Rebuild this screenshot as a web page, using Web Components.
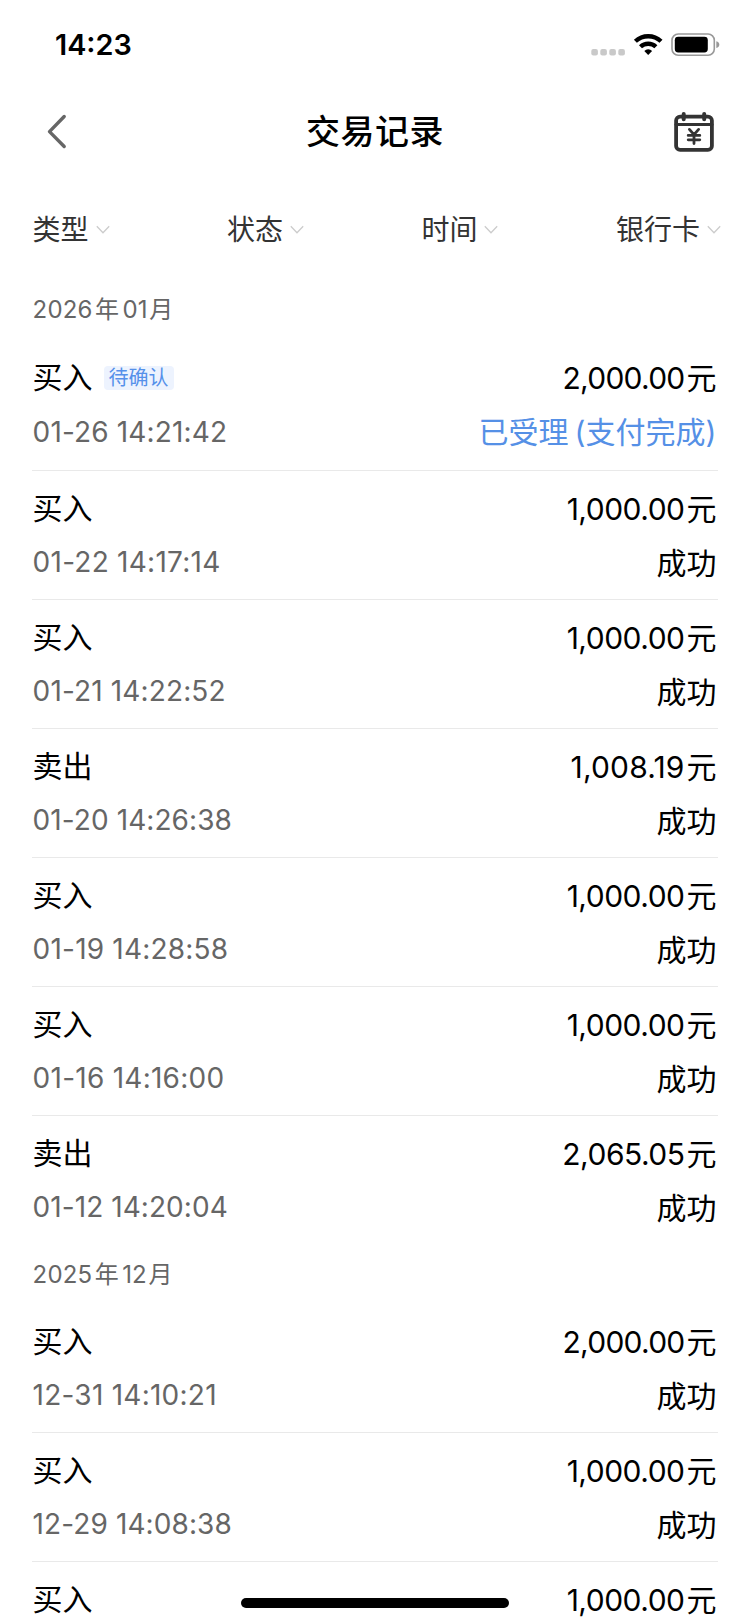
<!DOCTYPE html>
<html lang="zh-CN">
<head>
<meta charset="utf-8">
<title>交易记录</title>
<style>
html,body{margin:0;padding:0;height:1624px;overflow:hidden;background:#fff}
body{font-family:Inter,"Noto Sans CJK SC",sans-serif;color:#000}
</style>
</head>
<body>
<app-screen>
  <status-bar slot="top">14:23</status-bar>
  <nav-bar slot="top">交易记录</nav-bar>
  <filter-bar slot="top">
    <filter-item>类型</filter-item><filter-item>状态</filter-item><filter-item>时间</filter-item><filter-item>银行卡</filter-item>
  </filter-bar>
  <month-group year="2026" month="01" class="first">
    <trade-row kind="买入" tag="待确认" amount="2,000.00" time="01-26 14:21:42" style="--a:-.75px;--t:.15px" pending>已受理<i></i>(支付完成)</trade-row>
    <trade-row kind="买入" amount="1,000.00" time="01-22 14:17:14" style="--t:.25px">成功</trade-row>
    <trade-row kind="买入" amount="1,000.00" time="01-21 14:22:52" style="--t:.14px">成功</trade-row>
    <trade-row kind="卖出" amount="1,008.19" time="01-20 14:26:38" style="--a:.15px;--t:.08px">成功</trade-row>
    <trade-row kind="买入" amount="1,000.00" time="01-19 14:28:58" style="--t:.2px">成功</trade-row>
    <trade-row kind="买入" amount="1,000.00" time="01-16 14:16:00" style="--t:.25px">成功</trade-row>
    <trade-row kind="卖出" amount="2,065.05" time="01-12 14:20:04" style="--t:.06px" last>成功</trade-row>
  </month-group>
  <month-group year="2025" month="12">
    <trade-row kind="买入" amount="2,000.00" time="12-31 14:10:21" style="--a:-.75px;--t:.25px">成功</trade-row>
    <trade-row kind="买入" amount="1,000.00" time="12-29 14:08:38" style="--t:.1px">成功</trade-row>
    <trade-row kind="买入" amount="1,000.00" time="" last></trade-row>
  </month-group>
</app-screen>
<script>
const define = (name, render) => customElements.define(name, class extends HTMLElement {
  connectedCallback() {
    if (this.shadowRoot) return;
    this.attachShadow({mode: 'open'}).innerHTML = render(this);
  }
});

define('app-screen', () => `
<style>
:host{display:block;position:relative;width:750px;height:1624px;overflow:hidden;background:#fff}
.home{position:absolute;left:241px;top:1598px;width:268px;height:10px;border-radius:5px;background:#000}
</style>
<slot name="top"></slot><slot></slot><div class="home"></div>`);

define('status-bar', () => `
<style>
:host{display:flex;justify-content:space-between;align-items:center;height:90px;padding:0 30px 0 55px;box-sizing:border-box;font-size:28.8px;font-weight:600}
svg{display:block}
span{padding-bottom:2px}
</style>
<span><slot></slot></span>
<svg width="130" height="30" viewBox="590 30 130 30">
  <g fill="#c9c9c9"><rect x="591.3" y="49" width="6.6" height="6.4" rx="2"/><rect x="600.3" y="49" width="6.6" height="6.4" rx="2"/><rect x="609.3" y="49" width="6.6" height="6.4" rx="2"/><rect x="618.3" y="49" width="6.6" height="6.4" rx="2"/></g>
  <g fill="none" stroke="#000" stroke-width="4.4"><path d="M635.4 41.25a18.8 18.8 0 0 1 25.6 0"/><path d="M640.5 46.75a11.3 11.3 0 0 1 15.4 0"/></g>
  <path d="M644.3 50.9a5.6 5.6 0 0 1 7.8 0l-3.9 4.1z"/>
  <rect x="672" y="34" width="42.3" height="21.2" rx="6.2" fill="none" stroke="#999" stroke-width="1.6"/>
  <rect x="674.8" y="36.8" width="33" height="15.6" rx="3.4"/>
  <path d="M716.3 41.2q3 .8 3 3.4t-3 3.4z" fill="#999"/>
</svg>`);

define('nav-bar', () => `
<style>
:host{display:grid;grid-template-columns:60px 1fr 60px;align-items:center;height:84px;padding:0 30px;font-size:34px;font-weight:500;letter-spacing:.5px;text-align:center}
svg{display:block}
span{padding-bottom:5px}
.right{justify-self:end}
</style>
<svg width="60" height="44" viewBox="30 110 60 44"><path d="M64.2 116.5 49.5 131.6 64.2 146.5" fill="none" stroke="#666" stroke-width="3.4" stroke-linecap="round" stroke-linejoin="round"/></svg>
<span><slot></slot></span>
<svg class="right" width="60" height="44" viewBox="660 110 60 44">
 <g fill="none" stroke="#333" stroke-width="3.8" stroke-linecap="round" stroke-linejoin="round">
 <rect x="676.1" y="116.6" width="35.8" height="33.3" rx="4"/><path d="M676 124.6H712" stroke-width="3"/><path d="M683.7 114v5.2M704.2 114v5.2" stroke-width="4"/>
 <path d="M689.4 129.4l4.6 5.3 4.6-5.3M688.2 135.4h11.6M688.2 139.8h11.6M694 135v8.6" stroke-width="2.8"/></g>
</svg>`);

define('filter-bar', () => `
<style>
:host{display:flex;justify-content:space-between;height:112px;margin-bottom:-2px;align-items:center;padding:0 29px 0 32.5px}
</style><slot></slot>`);

define('filter-item', () => `
<style>
:host{display:flex;align-items:center;gap:7px;font-size:28px;line-height:40px;color:#333}
svg{display:block}
</style>
<span><slot></slot></span>
<svg width="14" height="10" viewBox="0 0 14 10"><path d="M.8 1.3 7 7.7 13.2 1.3" fill="none" stroke="#ccc" stroke-width="1.3"/></svg>`);

define('month-group', el => `
<style>
:host{display:block;padding:0 32px}
h2{display:flex;align-items:center;box-sizing:border-box;margin:0;height:59px;padding:0 0 0 .6px;font-size:24px;line-height:36px;font-weight:400;color:#666}
:host(.first) h2{height:56px;padding-bottom:4px}
span{letter-spacing:.15px}
b{font-weight:400;margin:0 3.5px 0 2.5px}
span+b+span+b{margin-left:1.5px}
</style>
<h2><span>${el.getAttribute('year')}</span><b>年</b><span>${el.getAttribute('month')}</span><b>月</b></h2>
<slot></slot>`);

define('trade-row', el => {
  const a = n => el.getAttribute(n) || '';
  return `
<style>
:host{display:block;height:129px;box-sizing:border-box;padding:13px 1.5px 0 .6px;border-bottom:1px solid #e9e9e9}
:host([last]){border-color:transparent}
:host([pending]){height:131px}
div{display:flex;justify-content:space-between;align-items:center}
.top{height:44px;font-size:30px}
.kind{display:flex;align-items:center}
.amount{padding-top:1px}
.tag{margin:5px 0 0 11.4px;width:70px;height:24px;line-height:24px;border-radius:4px;background:#edf3fe;color:#5590ea;font-size:20px;text-align:center;text-indent:-1px}
.bottom{height:44px;margin-top:11px;font-size:30px}
time{font-size:28px;color:#666;letter-spacing:var(--t,.2px);padding-top:1px}
:host([pending]) time{padding-top:3px}
.state{padding-bottom:1px}
.num{letter-spacing:var(--a,-.5px)}
:host([pending]) .state{color:#5590e6}
.unit{margin-left:2px}
::slotted(i){display:inline-block;width:6px}
</style>
<div class="top"><span class="kind">${a('kind')}${a('tag') ? `<span class="tag">${a('tag')}</span>` : ''}</span><span class="amount"><span class="num">${a('amount')}</span><span class="unit">元</span></span></div>
<div class="bottom"><time>${a('time')}</time><span class="state"><slot></slot></span></div>`;
});
</script>
</body>
</html>
